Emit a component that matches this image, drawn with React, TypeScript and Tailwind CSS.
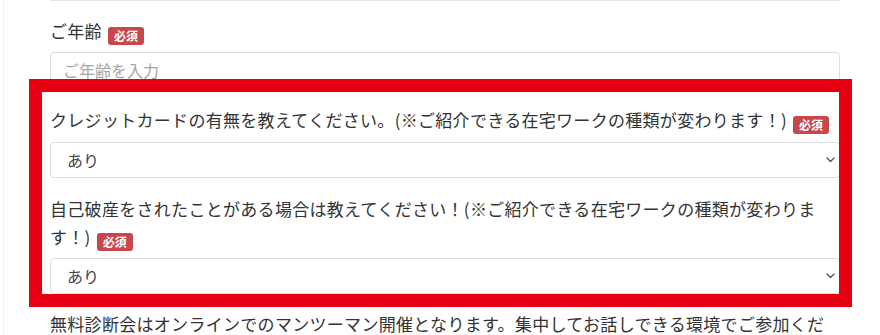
import React from "react";

const font = "font-['Noto_Sans_CJK_JP',sans-serif]";

function Required() {
  return (
    <span className="ml-[6px] inline-flex h-[18px] w-[36px] items-center justify-center rounded-[3px] bg-[#c8474a] align-[-3px] text-[12px] font-bold leading-none tracking-normal text-white">
      必須
    </span>
  );
}

function Chevron() {
  return (
    <svg
      className="pointer-events-none absolute right-[5px] top-1/2 -translate-y-1/2"
      width="9"
      height="6"
      viewBox="0 0 9 6"
      fill="none"
    >
      <path d="M1 1l3.5 3.5L8 1" stroke="#555" strokeWidth="1.4" strokeLinecap="round" strokeLinejoin="round" />
    </svg>
  );
}

function SelectBox() {
  return (
    <div className="relative">
      <select
        defaultValue="あり"
        className="h-[36px] w-full appearance-none rounded-[4px] border border-[#dedede] bg-white pl-[16px] text-[16px] text-[#444] outline-none"
      >
        <option>あり</option>
        <option>なし</option>
      </select>
      <Chevron />
    </div>
  );
}

export default function App() {
  return (
    <div className={`relative h-[335px] w-[880px] overflow-hidden bg-white ${font}`}>
      <div className="ml-[3px] h-full border-l border-[#f0f0f0] pl-[46px] pr-[40px]">
        {/* bottom of the previous field */}
        <div className="h-[1px] rounded-b-[4px] border-b border-[#e4e4e4]" />

        <div className="mt-[16px]">
          <p className="mb-[7px] text-[17px] leading-[28px] tracking-[0.3px] text-[#333]">
            ご年齢
            <Required />
          </p>
          <input
            type="text"
            placeholder="ご年齢を入力"
            className="h-[36px] w-full rounded-[4px] border border-[#dedede] bg-white px-[12px] text-[16px] text-[#444] outline-none placeholder:text-[#a6a6a6]"
          />
        </div>

        <div className="mt-[18px]">
          <p className="mb-[8px] text-[17px] leading-[28px] tracking-[0.3px] text-[#333]">
            クレジットカードの有無を教えてください。(※ご紹介できる在宅ワークの種類が変わります！)
            <Required />
          </p>
          <SelectBox />
        </div>

        <div className="mt-[17px]">
          <p className="mb-[7px] text-[17px] leading-[28px] tracking-[0.3px] text-[#333]">
            自己破産をされたことがある場合は教えてください！(※ご紹介できる在宅ワークの種類が変わります！)
            <Required />
          </p>
          <SelectBox />
        </div>

        <p className="mt-[16px] text-[17px] leading-[28px] tracking-[0.3px] text-[#333]">
          無料診断会はオンラインでのマンツーマン開催となります。集中してお話しできる環境でご参加ください。
        </p>
      </div>

      {/* highlight frame */}
      <div className="pointer-events-none absolute left-[29px] top-[79px] h-[228px] w-[823px] border-[13px] border-[#e60012]" />
    </div>
  );
}
